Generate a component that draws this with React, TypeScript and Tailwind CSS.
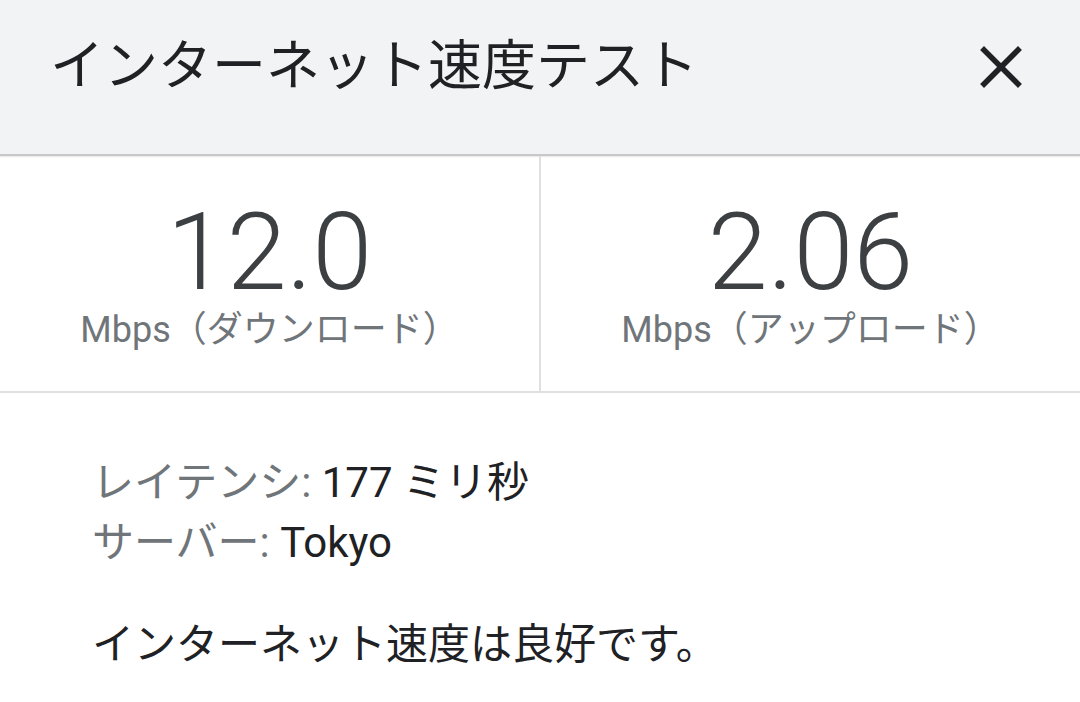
import React from 'react';

const font = "font-['Roboto','Noto_Sans_CJK_JP',sans-serif]";

const Stat: React.FC<{ value: string; label: string; divider?: boolean }> = ({ value, label, divider }) => (
  <div className={`flex flex-col items-center pt-[42px] ${divider ? 'border-r-2 border-[#e0e0e0]' : ''}`}>
    <div className="text-[108px] font-light leading-[108px] text-[#3c4043]">{value}</div>
    <div className="mt-[2px] text-[36px] leading-[44px] text-[#70757a]">{label}</div>
  </div>
);

const App: React.FC = () => {
  return (
    <div className={`w-[1080px] h-[702px] bg-white ${font} overflow-hidden`}>
      <header className="h-[156px] bg-[#f1f3f4] border-b-2 border-[#c8c8c8] flex items-center justify-between pl-[50px] pr-[58px] shadow-[0_1px_1px_rgba(0,0,0,0.08)]">
        <h1 className="text-[54px] font-normal text-[#202124] leading-none -mt-[20px]">インターネット速度テスト</h1>
        <svg width="42" height="42" viewBox="0 0 42 42" className="-mt-[20px]">
          <path d="M4 4L38 38M38 4L4 38" stroke="#202124" strokeWidth="5.5" strokeLinecap="square" />
        </svg>
      </header>

      <section className="grid grid-cols-[541px_1fr] h-[237px] border-b-2 border-[#e0e0e0]">
        <Stat value="12.0" label="Mbps（ダウンロード）" divider />
        <Stat value="2.06" label="Mbps（アップロード）" />
      </section>

      <section className="pl-[92px] pt-[60px] text-[42px] leading-[60px] text-[#202124]">
        <div>
          <span className="text-[#70757a]">レイテンシ:</span> 177 ミリ秒
        </div>
        <div>
          <span className="text-[#70757a]">サーバー:</span> Tokyo
        </div>
        <p className="mt-[42px]">インターネット速度は良好です。</p>
      </section>
    </div>
  );
};

export default App;
